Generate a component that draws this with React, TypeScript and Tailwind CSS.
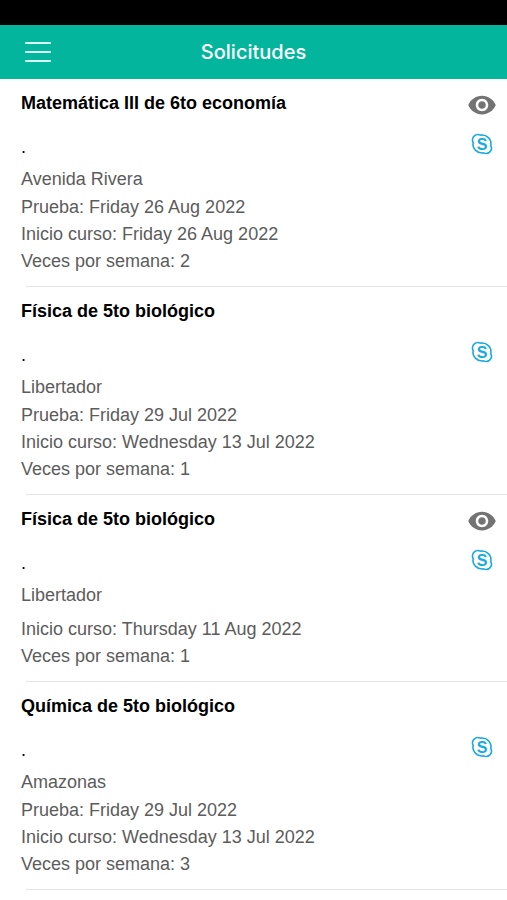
import React from "react";
import { MdVisibility } from "react-icons/md";

type Solicitud = {
  id: number;
  title: string;
  place: string;
  prueba?: string;
  inicio: string;
  veces: number;
  visible: boolean;
};

const solicitudes: Solicitud[] = [
  {
    id: 1,
    title: "Matemática III de 6to economía",
    place: "Avenida Rivera",
    prueba: "Friday 26 Aug 2022",
    inicio: "Friday 26 Aug 2022",
    veces: 2,
    visible: true,
  },
  {
    id: 2,
    title: "Física de 5to biológico",
    place: "Libertador",
    prueba: "Friday 29 Jul 2022",
    inicio: "Wednesday 13 Jul 2022",
    veces: 1,
    visible: false,
  },
  {
    id: 3,
    title: "Física de 5to biológico",
    place: "Libertador",
    inicio: "Thursday 11 Aug 2022",
    veces: 1,
    visible: true,
  },
  {
    id: 4,
    title: "Química de 5to biológico",
    place: "Amazonas",
    prueba: "Friday 29 Jul 2022",
    inicio: "Wednesday 13 Jul 2022",
    veces: 3,
    visible: false,
  },
];

function SkypeIcon() {
  return (
    <svg viewBox="0 0 24 24" className="h-6 w-6" fill="none" aria-hidden="true">
      <path
        d="M10.4 3.14A5.4 5.4 0 0 0 3.14 10.4A9 9 0 0 0 13.6 20.86A5.4 5.4 0 0 0 20.86 13.6A9 9 0 0 0 10.4 3.14Z"
        stroke="#17a9e1"
        strokeWidth="1.6"
        strokeLinejoin="round"
      />
      <text
        x="12"
        y="17.6"
        textAnchor="middle"
        fontSize="16"
        fontWeight="700"
        fill="#17a9e1"
      >
        S
      </text>
    </svg>
  );
}

function Header() {
  return (
    <header className="grid h-[54px] grid-cols-[1fr_auto_1fr] items-center bg-[#03b59c] px-6 text-white">
      <button
        type="button"
        aria-label="Menú"
        className="flex w-7 flex-col gap-[7px] px-px"
      >
        <span className="h-0.5 rounded-full bg-[#d9fff8]" />
        <span className="h-0.5 rounded-full bg-[#d9fff8]" />
        <span className="h-0.5 rounded-full bg-[#d9fff8]" />
      </button>
      <h1 className="font-['Inter',sans-serif] text-xl font-medium">
        Solicitudes
      </h1>
    </header>
  );
}

function SolicitudItem({ item }: { item: Solicitud }) {
  return (
    <li>
      <div className="flex justify-between pt-2.5 pr-2.5 pb-[11px] pl-[21px]">
        <div className="text-lg leading-7 text-[#5c5c5c]">
          <h2 className="font-bold text-black">{item.title}</h2>
          <p className="mt-4 mb-1 text-black">.</p>
          <p>{item.place}</p>
          {item.prueba ? (
            <p>Prueba: {item.prueba}</p>
          ) : (
            <div className="h-[7px]" />
          )}
          <p className="leading-[26px]">Inicio curso: {item.inicio}</p>
          <p>Veces por semana: {item.veces}</p>
        </div>
        <div className="flex w-[30px] flex-col items-center gap-3 pt-px">
          <div className="h-[30px]">
            {item.visible && (
              <button type="button" aria-label="Ver" className="block">
                <MdVisibility className="h-[30px] w-[30px] text-[#737373]" />
              </button>
            )}
          </div>
          <button type="button" aria-label="Skype" className="block">
            <SkypeIcon />
          </button>
        </div>
      </div>
      <div className="ml-[26px] h-px bg-[#e4e4e4]" />
    </li>
  );
}

export default function App() {
  return (
    <div className="min-h-screen bg-white font-['Liberation_Sans',Arial,sans-serif]">
      <div className="h-[25px] bg-black" />
      <Header />
      <main>
        <ul>
          {solicitudes.map((item) => (
            <SolicitudItem key={item.id} item={item} />
          ))}
        </ul>
      </main>
    </div>
  );
}
